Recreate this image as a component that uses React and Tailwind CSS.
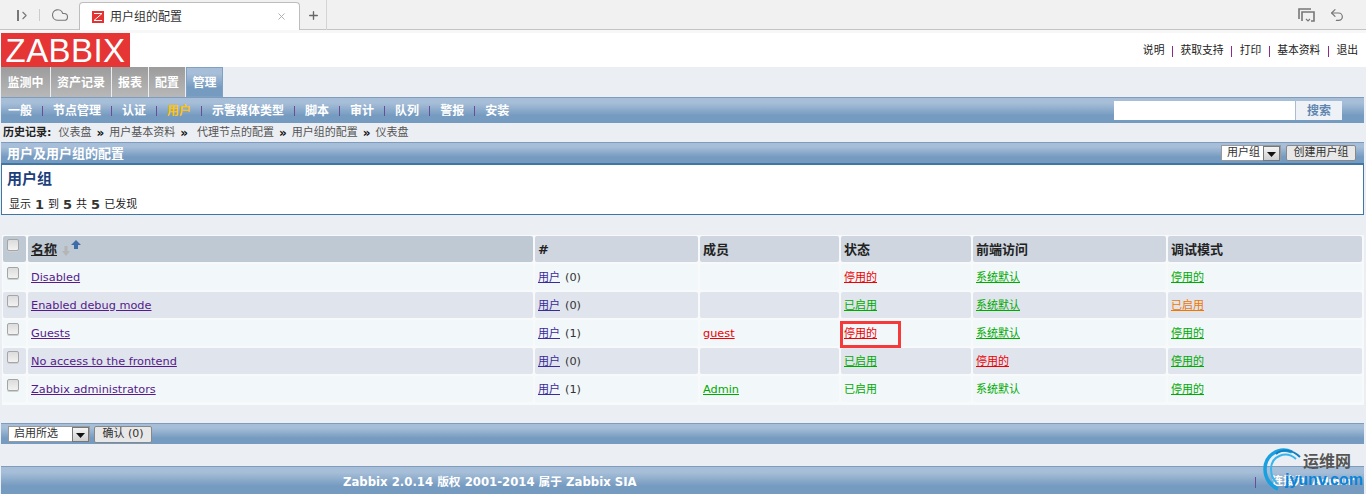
import React from 'react';
import { ChevronRight, Cloud, Plus, X, Undo2 } from 'lucide-react';

const FONT = 'font-["DejaVu_Sans","Noto_Sans_CJK_SC",sans-serif]';
const BAR = 'bg-gradient-to-b from-[#a6bed8] from-20% to-[#769bc0] to-70%';

const tabs = [
  { label: '监测中', w: 'w-[49px]' },
  { label: '资产记录', w: 'w-[60px]' },
  { label: '报表', w: 'w-[36px]' },
  { label: '配置', w: 'w-[36px]' },
];
const subNav = ['一般', '节点管理', '认证', '用户', '示警媒体类型', '脚本', '审计', '队列', '警报', '安装'];
const history = ['仪表盘', '用户基本资料', '代理节点的配置', '用户组的配置', '仪表盘'];
const topLinks = ['说明', '获取支持', '打印', '基本资料', '退出'];

const GREEN = 'text-[#00aa00]';
const RED = 'text-[#ee0000]';
const ORANGE = 'text-[#ee7700]';

const rows = [
  { name: 'Disabled', count: 0, status: ['停用的', RED], front: ['系统默认', GREEN], debug: ['停用的', GREEN] },
  { name: 'Enabled debug mode', count: 0, status: ['已启用', GREEN], front: ['系统默认', GREEN], debug: ['已启用', ORANGE] },
  { name: 'Guests', count: 1, member: ['guest', RED], status: ['停用的', RED], front: ['系统默认', GREEN], debug: ['停用的', GREEN] },
  { name: 'No access to the frontend', count: 0, status: ['已启用', GREEN], front: ['停用的', RED], debug: ['停用的', GREEN] },
  { name: 'Zabbix administrators', count: 1, member: ['Admin', GREEN], status: ['已启用', GREEN, true], front: ['系统默认', GREEN, true], debug: ['停用的', GREEN] },
];

const Check = () => (
  <span className="mt-[3px] ml-[4px] block h-[12px] w-[12px] rounded-[2px] border border-[#a5a5a5] bg-gradient-to-b from-[#dcdcdc] to-[#f2f2f2] shadow-[0_1px_0_#cfcfcf]" />
);

const Arrow = () => (
  <span className="flex h-[15px] w-[17px] shrink-0 items-center justify-center border border-[#777] bg-gradient-to-b from-[#f4f4f4] to-[#cfcfcf]">
    <svg width="9" height="5" viewBox="0 0 9 5" className="mt-[2px]"><path d="M0 0h9L4.5 5z" fill="#111" /></svg>
  </span>
);

const Cell = ({ bg, children, className = '' }) => (
  <div className={`flex items-center rounded-[2px] pl-[3px] pt-[2px] ${bg} ${className}`}>{children}</div>
);

const Status = ({ v }) => (
  <a className={`${v[1]} ${v[2] ? '' : 'underline'} text-[11px]`}>{v[0]}</a>
);

const Num = ({ children }) => <b className="text-[13px] font-bold leading-[14px] text-[#333]">{children}</b>;

const App = () => {
  return (
    <div className={`relative h-[494px] w-[1366px] overflow-hidden bg-[#ebeef2] text-[11px] text-[#222] ${FONT}`}>
      {/* browser chrome */}
      <div className="flex h-[33px] items-start border-b-[3px] border-b-[#f7f7f7] bg-[#f1f1f1] shadow-[inset_0_-1px_0_#c4c4c4]">
        <div className="flex h-[30px] w-[79px] items-center text-[#777]">
          <span className="ml-[17px] h-[11px] w-[2px] bg-[#777]" />
          <ChevronRight size={13} strokeWidth={2} className="-ml-[1px]" />
          <span className="ml-[8px] h-[12px] w-px bg-[#ccc]" />
          <Cloud size={18} strokeWidth={1.5} className="ml-[11px]" />
        </div>
        <div className="mt-[2px] flex h-[28px] w-[221px] items-center rounded-t-[4px] border border-b-0 border-[#bdbdbd] bg-white pl-[12px] text-[12px] text-[#333]">
          <span className="flex h-[12px] w-[12px] items-center justify-center bg-[#e53333]">
            <svg width="10" height="10" viewBox="0 0 10 10"><path d="M1 1.5h8L1 8.5h8" stroke="#fff" strokeWidth="1" fill="none" /></svg>
          </span>
          <span className="ml-[6px] w-[166px] -translate-y-px font-['Noto_Sans_CJK_SC']">用户组的配置</span>
          <X size={11} className="text-[#aaa]" />
        </div>
        <div className="flex h-[30px] w-[27px] items-center justify-center border-r border-[#d4d4d4] text-[#666]">
          <Plus size={13} strokeWidth={2.5} />
        </div>
        <div className="ml-auto mr-[21px] flex h-[30px] items-center gap-[14px] text-[#777]">
          <svg width="17" height="15" viewBox="0 0 17 15" fill="none" stroke="#777" strokeWidth="1.6">
            <path d="M1 11V1h12" />
            <path d="M4 13V4h12v9h-3" />
            <path d="M8 11l2 2 2-2" strokeWidth="1.2" />
          </svg>
          <Undo2 size={16} strokeWidth={1.8} />
        </div>
      </div>

      {/* logo and top links */}
      <div className="flex h-[34px] items-start bg-white pl-[1px] pr-[8px]">
        <div className="flex h-[34px] w-[129px] items-center justify-center bg-[#e53535] font-['Liberation_Sans',sans-serif] text-[33px] leading-none tracking-[0.4px] text-white">
          ZABBIX
        </div>
        <div className="ml-auto mt-[10px] flex items-center text-[10.8px] text-[#222]">
          {topLinks.map((l, i) => (
            <React.Fragment key={l}>
              {i > 0 && <span className="mx-[7.5px] h-[11px] w-px bg-[#8e2a8e]" />}
              <span>{l}</span>
            </React.Fragment>
          ))}
        </div>
      </div>

      {/* main tabs */}
      <div className="flex h-[30px] gap-px pl-[1px] text-[12px] font-bold text-white">
        {tabs.map((t) => (
          <div key={t.label} className={`flex items-center justify-center bg-gradient-to-b from-[#9c9c9c] to-[#b8b8b8] pt-[1px] ${t.w}`}>
            {t.label}
          </div>
        ))}
        <div className={`flex w-[37px] items-center justify-center border border-[#7ea1c4] pt-[1px] ${BAR}`}>管理</div>
      </div>

      {/* sub nav */}
      <div className={`ml-[1px] mr-[2px] flex h-[26px] items-center border-t border-[#7f9cbc] pl-[7px] pr-[22px] ${BAR}`}>
        {subNav.map((s, i) => (
          <React.Fragment key={s}>
            {i > 0 && <span className="mx-[10px] h-[10px] w-px bg-[#6a4c97]" />}
            <span className={`pt-[1px] text-[12px] font-bold ${s === '用户' ? 'text-[#ffc20e]' : 'text-white'}`}>{s}</span>
          </React.Fragment>
        ))}
        <div className="ml-auto flex h-[19px]">
          <div className="w-[181px] bg-white" />
          <div className="flex w-[47px] items-center justify-center border-l border-[#a9bcd2] bg-[#eef2f7] text-[12px] font-bold text-[#5f86b0]">搜索</div>
        </div>
      </div>

      {/* history */}
      <div className="flex h-[19px] items-center pl-[3px] pt-[1px] text-[11px] text-[#555]">
        <span className="mr-[7px] font-bold text-[#222]">历史记录:</span>
        {history.map((h, i) => (
          <React.Fragment key={i}>
            {i > 0 && <span className={`text-[12px] font-bold text-[#111] ${i === 2 ? 'ml-[5px] mr-[9px]' : 'mx-[5px]'}`}>»</span>}
            <span>{h}</span>
          </React.Fragment>
        ))}
      </div>

      {/* section title */}
      <div className={`ml-[1px] mr-[2px] flex h-[21px] items-center border-t border-[#7f9cbc] pl-[6px] pr-[8px] ${BAR}`}>
        <span className="pt-[1px] text-[13px] font-bold text-white">用户及用户组的配置</span>
        <div className="ml-auto flex items-center gap-[5px]">
          <div className="flex h-[16px] w-[60px] items-center justify-between border border-[#999] bg-white pl-[5px] text-[11px] text-[#333]">
            用户组
            <Arrow />
          </div>
          <div className="flex h-[16px] w-[70px] items-center justify-center rounded-[2px] border border-[#888] bg-[#e8e8e8] text-[11px] text-[#333]">
            创建用户组
          </div>
        </div>
      </div>

      {/* heading box */}
      <div className="ml-[1px] mr-[2px] h-[52px] border border-t-2 border-[#3f76a6] bg-white pl-[5px]">
        <div className="mt-[5px] text-[15px] font-bold leading-[18px] text-[#1c3f7c]">用户组</div>
        <div className="ml-[2px] mt-[10px] flex items-center gap-[4px] text-[11px] leading-[14px] text-[#222]">
          <span>显示</span><Num>1</Num>
          <span>到</span><Num>5</Num>
          <span>共</span><Num>5</Num>
          <span>已发现</span>
        </div>
      </div>

      {/* table */}
      <div className="ml-[2px] mr-[2px] mt-[20px] grid h-[170px] grid-cols-[23px_505px_163px_139px_130px_193px_194px] grid-rows-[26px_repeat(5,26px)] gap-[2px] bg-[#f8f9fb] p-px">
        <Cell bg="bg-[#bec9d3]" className="!items-start !pl-0 !pt-0"><Check /></Cell>
        <Cell bg="bg-[#bec9d3]" className="text-[13px] font-bold text-[#222]">
          <span className="underline">名称</span>
          <svg width="20" height="16" viewBox="0 0 20 16" className="-mt-[4px] ml-[5px]">
            <path d="M2.5 6h3v5H8l-4 5-4-5h2.5z" fill="#b5b5b5" />
            <path d="M14 0l5 5h-3v4h-4V5H9z" fill="#3d6ca8" />
          </svg>
        </Cell>
        {['#', '成员', '状态', '前端访问', '调试模式'].map((h) => (
          <Cell key={h} bg="bg-[#cfd6e0]" className="text-[13px] font-bold text-[#222]">{h}</Cell>
        ))}
        {rows.map((r, i) => {
          const bg = i % 2 === 0 ? 'bg-[#f2f7fa]' : 'bg-[#e0e4ec]';
          return (
            <React.Fragment key={r.name}>
              <Cell bg={bg} className="!items-start !pl-0 !pt-0"><Check /></Cell>
              <Cell bg={bg}><a className="text-[11.3px] text-[#551a8b] underline">{r.name}</a></Cell>
              <Cell bg={bg} className="text-[#333]">
                <a className="text-[#3a2a9a] underline">用户</a>
                <span className="ml-[5px] text-[11.3px]">({r.count})</span>
              </Cell>
              <Cell bg={bg}>{r.member && <a className={`${r.member[1]} text-[11.3px] underline`}>{r.member[0]}</a>}</Cell>
              <Cell bg={bg}><Status v={r.status} /></Cell>
              <Cell bg={bg}><Status v={r.front} /></Cell>
              <Cell bg={bg}><Status v={r.debug} /></Cell>
            </React.Fragment>
          );
        })}
      </div>

      {/* action bar */}
      <div className={`ml-[1px] mr-[2px] mt-[18px] flex h-[21px] items-center gap-[4px] border-t border-[#7f9cbc] pl-[7px] ${BAR}`}>
        <div className="flex h-[16px] w-[82px] items-center justify-between border border-[#999] bg-white pl-[5px] text-[11px] text-[#333]">
          启用所选
          <Arrow />
        </div>
        <div className="flex h-[17px] w-[58px] items-center justify-center rounded-[2px] border border-[#888] bg-[#e8e8e8] text-[11px] text-[#333]">
          确认 (0)
        </div>
      </div>

      {/* footer */}
      <div className={`ml-[1px] mr-[2px] mt-[22px] flex h-[28px] items-center border-t border-[#7f9cbc] pl-[342px] pt-[4px] ${BAR}`}>
        <span className="text-[11.7px] font-bold text-white">Zabbix 2.0.14 版权 2001-2014 属于 Zabbix SIA</span>
        <span className="ml-auto mr-[9px] flex items-center text-[11px] font-bold text-white">
          <span className="mr-[16px] h-[11px] w-px bg-[#6a4c97]" />
          连接为 'Admin'
        </span>
      </div>

      {/* highlight drawn over the screenshot */}
      <div className="absolute left-[840px] top-[321px] h-[27px] w-[61px] border-[3px] border-[#f43a3a]" />

      {/* watermark */}
      <div className="absolute left-[1262px] top-[446px] h-[48px] w-[104px]">
        <svg width="44" height="46" viewBox="0 0 44 46" className="absolute left-0 top-0" fill="none">
          <path d="M30 6C16 0 3 10 3 23c0 10 6 17 13 20" stroke="#19a0e0" strokeWidth="3.5" />
          <path d="M34 13C24 4 9 10 9 23c0 6 2 11 6 14" stroke="#35b6ec" strokeWidth="2" />
          <path d="M38 11C30 3 20 3 14 8" stroke="#0f7fc0" strokeWidth="2" />
        </svg>
        <span className="absolute left-[41px] top-[4px] font-['Noto_Sans_CJK_SC'] text-[16px] font-bold leading-[20px] text-[#555]">运维网</span>
        <span className="absolute left-[23px] top-[24px] font-['Liberation_Sans'] text-[16px] font-bold leading-[20px] text-[#0a84d8]">jyunv.com</span>
      </div>
    </div>
  );
};

export default App;
